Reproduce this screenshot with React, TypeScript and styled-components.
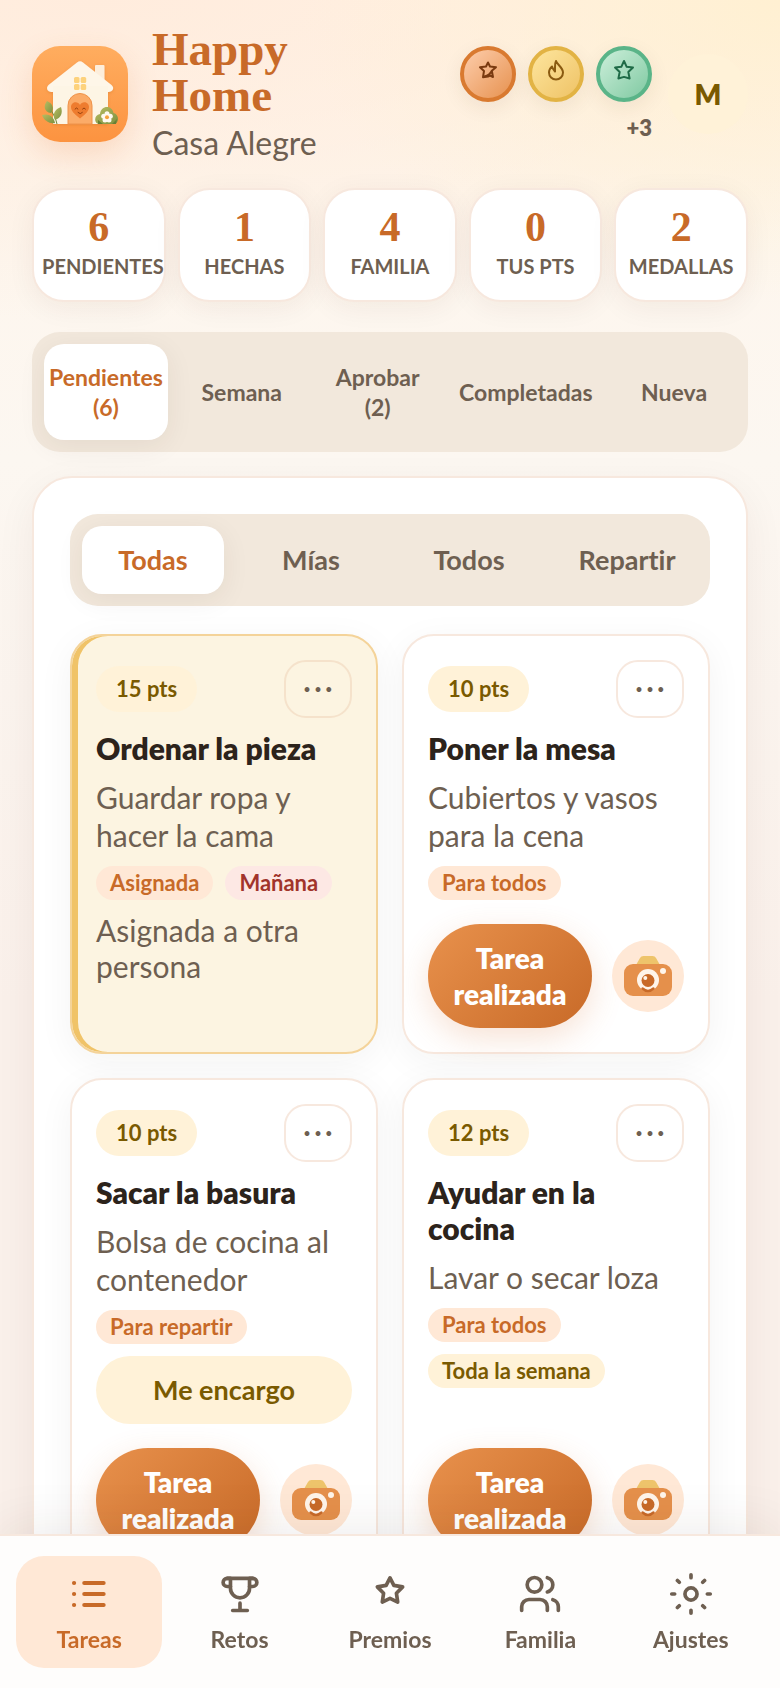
import React from 'react';
import styled, { createGlobalStyle, css } from 'styled-components';
import { Users } from 'lucide-react';

const color = {
  accent: '#c86a28',
  ink: '#2c231b',
  muted: '#6e5f51',
  olive: '#7a5a00',
  peach: '#ffe8d6',
  cream: '#fff2d8',
  sand: '#f2e8dc',
  line: '#f7e8de',
  gold: '#f0c368',
};

const GlobalStyle = createGlobalStyle`
  *, *::before, *::after { box-sizing: border-box; }
  body {
    margin: 0;
    font-family: Lato, 'Open Sans', sans-serif;
    font-variant-ligatures: none;
    color: ${color.ink};
    background-color: #faf1eb;
  }
  h1, h2, h3, p, ul, dl, dd, dt { margin: 0; padding: 0; }
  ul { list-style: none; }
  button { font: inherit; font-variant-ligatures: none; border: 0; cursor: pointer; }
`;

const Page = styled.div`
  min-height: 100vh;
  padding: 26px 32px 72px;
  background:
    radial-gradient(ellipse 480px 300px at 100% 0, #fff0d2 0, rgba(255, 240, 210, 0) 100%),
    radial-gradient(ellipse 1100px 320px at 12% 0, #ffecdd 0, rgba(255, 236, 221, 0) 100%),
    linear-gradient(180deg, #fff5ea 0, #fcf7f1 460px, #faf0ea 1000px, #faf0ea 100%);
`;

const Header = styled.header`
  display: flex;
  align-items: center;
  gap: 24px;
`;

const LogoBox = styled.div`
  flex: none;
  width: 96px;
  height: 96px;
  border-radius: 28px;
  overflow: hidden;
  box-shadow: 0 12px 32px rgba(232, 120, 50, 0.2);

  svg { display: block; width: 100%; height: 100%; }
`;

const Brand = styled.div`
  flex: 1;
  min-width: 0;
`;

const BrandName = styled.h1`
  max-width: 200px;
  margin-bottom: 6px;
  font: 700 47px/46px 'Liberation Serif', serif;
  color: ${color.accent};
`;

const HouseName = styled.p`
  font-size: 32px;
  line-height: 38px;
  color: ${color.muted};
`;

const MedalColumn = styled.div`
  display: flex;
  flex-direction: column;
  align-items: flex-end;
  gap: 12px;
`;

const MedalRow = styled.ul`
  display: flex;
  gap: 12px;
`;

const Medal = styled.li<{ $ring: string; $from: string; $to: string; $ink: string }>`
  display: flex;
  justify-content: center;
  width: 56px;
  height: 56px;
  padding-top: 8px;
  border: 4px solid ${(p) => p.$ring};
  border-radius: 50%;
  background: linear-gradient(135deg, ${(p) => p.$from}, ${(p) => p.$to});
  background-origin: border-box;
  color: ${(p) => p.$ink};
  box-shadow: 0 6px 20px rgba(80, 50, 20, 0.08);

  svg { width: 24px; height: 24px; }
`;

const MoreMedals = styled.span`
  font-size: 22px;
  font-weight: 800;
  line-height: 28px;
  color: ${color.muted};
`;

const Avatar = styled.button`
  flex: none;
  width: 80px;
  height: 80px;
  margin-left: -8px;
  padding: 0;
  border-radius: 50%;
  background: ${color.cream};
  color: ${color.olive};
  font-size: 28px;
  font-weight: 800;
`;

const Stats = styled.dl`
  display: grid;
  grid-template-columns: repeat(5, minmax(0, 1fr));
  gap: 12px;
  margin-top: 26px;
`;

const Stat = styled.div`
  display: flex;
  flex-direction: column-reverse;
  justify-content: flex-end;
  height: 114px;
  padding: 17px 8px;
  border: 2px solid ${color.line};
  border-radius: 32px;
  background: #fff;
  text-align: center;
  box-shadow: 0 6px 28px rgba(60, 36, 20, 0.06);
`;

const StatValue = styled.dd`
  font: 700 42px/40px 'Liberation Serif', serif;
  color: ${color.accent};
`;

const StatLabel = styled.dt`
  font-size: 20px;
  font-weight: 700;
  line-height: 38px;
  white-space: nowrap;
  color: ${color.muted};
`;

const Segments = styled.nav<{ $columns: string; $gap: number }>`
  display: grid;
  grid-template-columns: ${(p) => p.$columns};
  gap: ${(p) => p.$gap}px;
  padding: 12px;
  border-radius: 28px;
  background: ${color.sand};
`;

const Segment = styled.button<{ $active?: boolean; $large?: boolean }>`
  padding: ${(p) => (p.$large ? '18px 0' : '18px 4px')};
  border-radius: 20px;
  background: transparent;
  color: ${color.muted};
  font-size: ${(p) => (p.$large ? 27 : 23)}px;
  font-weight: 700;
  line-height: ${(p) => (p.$large ? 32 : 30)}px;
  ${(p) =>
    p.$active &&
    css`
      background: #fff;
      color: ${color.accent};
      box-shadow: 0 6px 28px rgba(60, 36, 20, 0.07);
    `}
`;

const SegmentCount = styled.span`
  display: block;
`;

const Sections = styled.div`
  margin: 30px 0 24px;
`;

const Panel = styled.main`
  padding: 36px;
  border: 2px solid ${color.line};
  border-radius: 40px;
  background: #fff;
  box-shadow: 0 12px 40px rgba(60, 36, 20, 0.06);
`;

const TaskGrid = styled.div`
  display: grid;
  grid-template-columns: repeat(2, minmax(0, 1fr));
  gap: 24px;
  margin-top: 28px;
`;

const Card = styled.article<{ $assigned?: boolean }>`
  display: flex;
  flex-direction: column;
  gap: 12px;
  padding: 24px;
  border: 2px solid ${(p) => (p.$assigned ? '#f4d399' : color.line)};
  border-radius: 32px;
  background: ${(p) => (p.$assigned ? '#fcf4e1' : '#fff')};
  box-shadow: ${(p) => (p.$assigned ? `inset 6px 0 0 ${color.gold}, ` : '')}0 8px 36px rgba(40, 30, 24, 0.05);
`;

const CardTop = styled.div`
  display: flex;
  align-items: center;
  justify-content: space-between;
`;

const Points = styled.span`
  padding: 0 20px;
  border-radius: 23px;
  background: ${color.cream};
  color: ${color.olive};
  font-size: 22px;
  font-weight: 700;
  line-height: 46px;
`;

const MenuButton = styled.button<{ $assigned?: boolean }>`
  width: 68px;
  height: 58px;
  padding: 0;
  border: 2px solid ${(p) => (p.$assigned ? '#f5e2cb' : color.line)};
  border-radius: 22px;
  background: transparent;
  color: ${color.muted};
  font-size: 13px;
`;

const TaskTitle = styled.h3`
  font-size: 30px;
  font-weight: 800;
  line-height: 36px;
`;

const TaskText = styled.p`
  font-size: 30px;
  line-height: 38px;
  color: ${color.muted};
`;

const TaskNote = styled.p`
  font-size: 30px;
  line-height: 36px;
  color: ${color.muted};
`;

const Tags = styled.ul`
  display: flex;
  flex-wrap: wrap;
  gap: 12px;
`;

const tones = {
  peach: css`background: ${color.peach}; color: ${color.accent};`,
  rose: css`background: #fde8e4; color: #a1342b;`,
  cream: css`background: ${color.cream}; color: ${color.olive};`,
};

const Tag = styled.li<{ $tone: keyof typeof tones }>`
  padding: 0 14px;
  border-radius: 17px;
  font-size: 22px;
  font-weight: 700;
  line-height: 34px;
  ${(p) => tones[p.$tone]}
`;

const ClaimButton = styled.button`
  padding: 16px;
  border-radius: 34px;
  background: ${color.cream};
  color: ${color.olive};
  font-size: 27px;
  font-weight: 700;
  line-height: 36px;
`;

const Actions = styled.div`
  display: flex;
  align-items: center;
  gap: 20px;
  margin-top: auto;
  padding-top: 12px;
`;

const DoneButton = styled.button`
  flex: 1;
  min-width: 0;
  padding: 16px 20px;
  border-radius: 52px;
  background: linear-gradient(135deg, #e8914c, ${color.accent});
  color: #fff;
  font-size: 28px;
  font-weight: 800;
  line-height: 36px;
  box-shadow: 0 10px 32px rgba(215, 110, 45, 0.2);
`;

const PhotoButton = styled.button`
  flex: none;
  width: 72px;
  height: 72px;
  padding: 12px;
  border-radius: 50%;
  background: ${color.peach};

  svg { display: block; width: 48px; height: 48px; }
`;

const BottomBar = styled.nav`
  position: fixed;
  right: 0;
  bottom: 0;
  left: 0;
  display: grid;
  grid-template-columns: repeat(5, minmax(0, 1fr));
  gap: 4px;
  padding: 20px 16px;
  border-top: 2px solid ${color.line};
  background: #fefdfc;
  box-shadow: 0 -8px 48px rgba(60, 36, 20, 0.08);
`;

const BottomLink = styled.a<{ $active?: boolean }>`
  display: flex;
  flex-direction: column;
  align-items: center;
  gap: 8px;
  padding: 16px 0 14px;
  border-radius: 28px;
  background: ${(p) => (p.$active ? color.peach : 'transparent')};
  color: ${(p) => (p.$active ? color.accent : color.muted)};
  font-size: 23px;
  font-weight: 700;
  line-height: 30px;
  text-decoration: none;

  svg { width: 44px; height: 44px; }
`;

const LineIcon = ({ children, weight = 2 }: { children: React.ReactNode; weight?: number }) => (
  <svg viewBox="0 0 24 24" fill="none" stroke="currentColor" strokeWidth={weight} strokeLinecap="round" strokeLinejoin="round" aria-hidden="true">
    {children}
  </svg>
);

const HouseLogo = () => (
  <svg viewBox="0 0 96 96" role="img" aria-label="Happy Home">
    <defs>
      <linearGradient id="tile" x1="0" y1="0" x2="0" y2="1">
        <stop offset="0" stopColor="#ffad5f" />
        <stop offset="1" stopColor="#fc9340" />
      </linearGradient>
      <linearGradient id="leaf" x1="0" y1="0" x2="1" y2="1">
        <stop offset="0" stopColor="#b9bd62" />
        <stop offset="1" stopColor="#7c9040" />
      </linearGradient>
      <filter id="lift" x="-20%" y="-20%" width="140%" height="140%">
        <feDropShadow dx="0" dy="1" stdDeviation="1.4" floodColor="#c0601c" floodOpacity=".3" />
      </filter>
    </defs>
    <rect width="96" height="96" fill="url(#tile)" />
    <g filter="url(#lift)">
      <rect x="63" y="19" width="9.500" height="18" rx="1" fill="#fdeedb" />
      <path d="M21 43h55v35H21z" fill="#fdf4e3" />
      <path d="M45 16.500q3-2.500 6 0l28.500 22.500c3.500 3 1 7-3 7H19.500c-4 0-6-4-3-7z" fill="#fef6e8" />
    </g>
    <path d="M21 40h55v38H21z" fill="#fdf5e5" />
    <g fill="#fdd27c">
      <rect x="42" y="31" width="5.500" height="6" rx="1.500" />
      <rect x="48.700" y="31" width="5.500" height="6" rx="1.500" />
      <rect x="42" y="38" width="5.500" height="6" rx="1.500" />
      <rect x="48.700" y="38" width="5.500" height="6" rx="1.500" />
    </g>
    <path d="M36 78V59.500a12 12 0 0 1 24 0V78z" fill="#fbab68" stroke="#ee924a" strokeWidth="1" />
    <path d="M48 72.500C42 68 39 64.500 39 61c0-5.500 7-6.500 9-2 2-4.500 9-3.500 9 2 0 3.500-3 7-9 11.500z" fill="#ee7c2f" />
    <path d="M43 63q1.500-2.300 3 0M50.500 63q1.500-2.300 3 0M46 66.500q2.200 2.600 4.400 0" fill="none" stroke="#93400f" strokeWidth="1" strokeLinecap="round" />
    <path d="M25 78c-1-5-4-11-8-17" fill="none" stroke="#6f873c" strokeWidth="1" />
    <g fill="url(#leaf)">
      <path d="M19 67c-7-1-8-7-4-12 5 2 8 7 4 12z" />
      <path d="M23 74c-3-6 0-11 6-13 2 6 0 11-6 13z" />
      <path d="M23 77c-5 1-11-2-13-8 6-2 12 1 13 8z" />
    </g>
    <path d="M67 78c-5 0-5.500-9 1-10 1-9 12-9 13.500-1 6 1 6 11 0 11z" fill="url(#leaf)" />
    <path d="M66 74l5 4h-5zM85 73l-5 5h4z" fill="#667f36" />
    <g fill="#fffaf0">
      <circle cx="75" cy="67.700" r="2.500" />
      <circle cx="78.300" cy="70.200" r="2.500" />
      <circle cx="77" cy="74" r="2.500" />
      <circle cx="73" cy="74" r="2.500" />
      <circle cx="71.700" cy="70.200" r="2.500" />
    </g>
    <circle cx="75" cy="71.200" r="2" fill="#f6a33d" />
  </svg>
);

const CameraIcon = () => (
  <svg viewBox="0 0 48 48" aria-hidden="true">
    <path d="M12 13l4-7q1-2 3.500-2h9q2.500 0 3.500 2l4 7z" fill="#eec46b" />
    <rect x="0" y="12" width="48" height="32" rx="9" fill="#e5904b" />
    <circle cx="24" cy="28" r="11" fill="#fff5ea" />
    <circle cx="24" cy="28.500" r="6.500" fill={color.accent} />
    <path d="M18.500 36.500q5.500 5 11 0" fill="none" stroke={color.accent} strokeWidth="2.400" strokeLinecap="round" />
    <circle cx="21.300" cy="26" r="2" fill="#fff5ea" />
    <circle cx="39" cy="19" r="3" fill="#fff5ea" />
  </svg>
);

const ListIcon = () => (
  <LineIcon weight={2.2}>
    <path d="M9.400 6H20M9.400 12H20M9.400 18H20M3.800 6h.1M3.800 12h.1M3.800 18h.1" />
  </LineIcon>
);

const CupIcon = () => (
  <LineIcon>
    <path d="M5 3.500h14M6.800 3.500v5.400a5.200 5.200 0 0 0 10.400 0V3.500M12 17v4M8 21h8" />
    <path d="M6.800 3.500H5a2 2 0 0 0 0 4.400h1.800M17.200 3.500H19a2 2 0 0 1 0 4.400h-1.800" />
  </LineIcon>
);

const StarIcon = () => (
  <LineIcon>
    <path d="M12 3.200l2.100 4.100 4.800.8-3.400 3.500.7 4.800-4.200-2-4.200 2 .7-4.800-3.400-3.500 4.800-.8z" />
  </LineIcon>
);

const SunIcon = () => (
  <LineIcon>
    <circle cx="12" cy="12" r="3.300" />
    <path d="M12 1.500v1.600M12 20.900v1.600M1.500 12h1.600M20.900 12h1.600M4.600 4.600l1 1M18.400 18.400l1 1M4.600 19.400l1-1M18.400 5.600l1-1" />
  </LineIcon>
);

const SketchStarIcon = () => (
  <LineIcon>
    <path d="M12 4.500l2 4 6 .7-4.200 3.500 1.200 6.300-3-1.500-2 1-5 .7L8 13 4 9.200l6-.7zM8.500 18.500q5-1 7.500-6" />
  </LineIcon>
);

const FlameIcon = () => (
  <LineIcon>
    <path d="M12 3c1 3.500 7 6.500 7 11.500a7 7 0 0 1-14 0c0-3 1.300-4.500 3-6 .5 2 1.300 3 3 5V9c0-2.500 0-4 1-6z" />
  </LineIcon>
);

const MedalStarIcon = () => (
  <LineIcon>
    <path d="M12 3l2.700 5.800 6.300.8-4.700 4.300 1.300 6.600-5.600-1.600-5.600 1.600 1.300-6.600L3 9.600l6.300-.8z" />
  </LineIcon>
);

const stats = [
  ['6', 'PENDIENTES'],
  ['1', 'HECHAS'],
  ['4', 'FAMILIA'],
  ['0', 'TUS PTS'],
  ['2', 'MEDALLAS'],
];

const sections: { label: string; count?: number }[] = [
  { label: 'Pendientes', count: 6 },
  { label: 'Semana' },
  { label: 'Aprobar', count: 2 },
  { label: 'Completadas' },
  { label: 'Nueva' },
];

const filters = ['Todas', 'Mías', 'Todos', 'Repartir'];

type Task = {
  points: number;
  title: string;
  text: string;
  tags: [string, keyof typeof tones][];
  note?: string;
  claimable?: boolean;
};

const tasks: Task[] = [
  { points: 15, title: 'Ordenar la pieza', text: 'Guardar ropa y hacer la cama', tags: [['Asignada', 'peach'], ['Mañana', 'rose']], note: 'Asignada a otra persona' },
  { points: 10, title: 'Poner la mesa', text: 'Cubiertos y vasos para la cena', tags: [['Para todos', 'peach']] },
  { points: 10, title: 'Sacar la basura', text: 'Bolsa de cocina al contenedor', tags: [['Para repartir', 'peach']], claimable: true },
  { points: 12, title: 'Ayudar en la cocina', text: 'Lavar o secar loza', tags: [['Para todos', 'peach'], ['Toda la semana', 'cream']] },
];

const links: [string, React.ReactNode][] = [
  ['Tareas', <ListIcon />],
  ['Retos', <CupIcon />],
  ['Premios', <StarIcon />],
  ['Familia', <Users aria-hidden="true" />],
  ['Ajustes', <SunIcon />],
];

const TaskCard = ({ task }: { task: Task }) => {
  const assigned = Boolean(task.note);
  return (
    <Card $assigned={assigned}>
      <CardTop>
        <Points>{task.points} pts</Points>
        <MenuButton $assigned={assigned} aria-label={`Opciones de ${task.title}`}>• • •</MenuButton>
      </CardTop>
      <TaskTitle>{task.title}</TaskTitle>
      <TaskText>{task.text}</TaskText>
      <Tags>
        {task.tags.map(([label, tone]) => (
          <Tag key={label} $tone={tone}>{label}</Tag>
        ))}
      </Tags>
      {task.claimable && <ClaimButton>Me encargo</ClaimButton>}
      {assigned ? (
        <TaskNote>{task.note}</TaskNote>
      ) : (
        <Actions>
          <DoneButton>Tarea realizada</DoneButton>
          <PhotoButton aria-label="Agregar foto"><CameraIcon /></PhotoButton>
        </Actions>
      )}
    </Card>
  );
};

export default function App() {
  return (
    <>
      <GlobalStyle />
      <Page>
        <Header>
          <LogoBox><HouseLogo /></LogoBox>
          <Brand>
            <BrandName>Happy Home</BrandName>
            <HouseName>Casa Alegre</HouseName>
          </Brand>
          <MedalColumn>
            <MedalRow>
              <Medal $ring="#d97a30" $from="#ffd2b3" $to="#e58d48" $ink="#7a3a10"><SketchStarIcon /></Medal>
              <Medal $ring="#e2b344" $from="#ffe9a3" $to="#edbf60" $ink="#8a5a10"><FlameIcon /></Medal>
              <Medal $ring="#5ab488" $from="#d3f2df" $to="#79c69d" $ink="#1f6b47"><MedalStarIcon /></Medal>
            </MedalRow>
            <MoreMedals>+3</MoreMedals>
          </MedalColumn>
          <Avatar aria-label="Perfil de M">M</Avatar>
        </Header>

        <Stats>
          {stats.map(([value, label]) => (
            <Stat key={label}>
              <StatLabel>{label}</StatLabel>
              <StatValue>{value}</StatValue>
            </Stat>
          ))}
        </Stats>

        <Sections>
          <Segments $columns="5fr 5fr 5fr 6fr 5fr" $gap={12} aria-label="Secciones">
            {sections.map(({ label, count }, i) => (
              <Segment key={label} $active={i === 0}>
                {label}
                {count !== undefined && <SegmentCount>{`(${count})`}</SegmentCount>}
              </Segment>
            ))}
          </Segments>
        </Sections>

        <Panel>
          <Segments $columns="repeat(4, 1fr)" $gap={16} aria-label="Filtros">
            {filters.map((label, i) => (
              <Segment key={label} $large $active={i === 0}>{label}</Segment>
            ))}
          </Segments>
          <TaskGrid>
            {tasks.map((task) => (
              <TaskCard key={task.title} task={task} />
            ))}
          </TaskGrid>
        </Panel>
      </Page>

      <BottomBar aria-label="Principal">
        {links.map(([label, icon], i) => (
          <BottomLink key={label} href={`#${label.toLowerCase()}`} $active={i === 0}>
            {icon}
            {label}
          </BottomLink>
        ))}
      </BottomBar>
    </>
  );
}
